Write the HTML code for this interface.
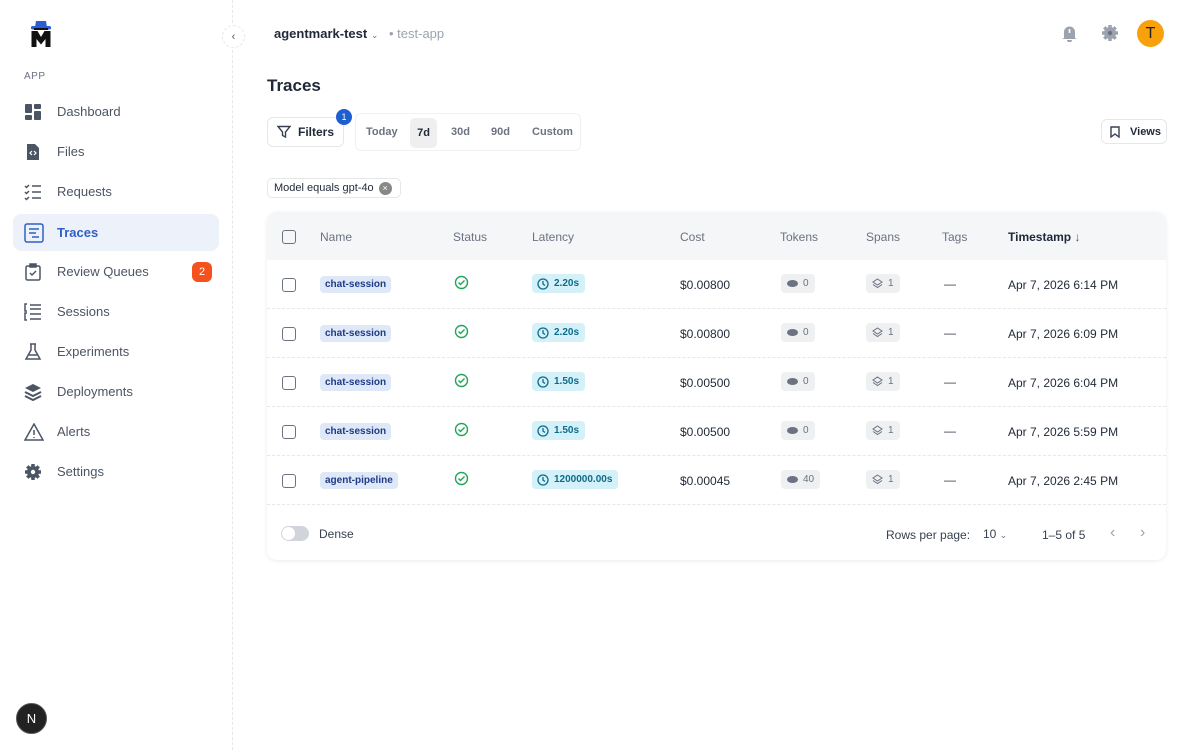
<!DOCTYPE html>
<html><head><meta charset="utf-8"><style>
*{box-sizing:border-box;margin:0;padding:0}
body{width:1200px;height:750px;background:#fff;font-family:"Liberation Sans",sans-serif;color:#1f2937;position:relative;overflow:hidden}
.side{position:absolute;left:0;top:0;width:233px;height:750px;border-right:1px dashed #e5e7eb}
.app{position:absolute;left:24px;top:71px;font-size:10px;color:#6b7280;letter-spacing:.5px}
.nav{position:absolute;left:13px;width:206px;height:37px;display:flex;align-items:center;font-size:13px;color:#4b5563}
.nav svg{position:absolute;left:11px}
.nav span{position:absolute;left:44px}
.nav.act{background:#edf2fa;border-radius:8px;color:#2f5fc4;font-weight:bold}
.badge{position:absolute;right:7px;width:20px;height:20px;border-radius:6px;background:#f4511e;color:#fff;font-size:11px;display:flex;align-items:center;justify-content:center}
.abs{position:absolute}
.btn{position:absolute;border:1px solid #e5e7eb;border-radius:6px;background:#fff;display:flex;align-items:center;font-size:12px;font-weight:bold;color:#1f2937}
.card{position:absolute;left:267px;top:212px;width:899px;height:348px;border-radius:10px;box-shadow:0 1px 4px rgba(0,0,0,.08);background:#fff;overflow:hidden}
.hd{position:absolute;left:0;top:0;width:100%;height:48px;background:#f4f6f8}
.cell{position:absolute;font-size:12px;white-space:nowrap}
.hc{color:#6b7280;font-size:12px;top:18px}
.row{position:absolute;left:0;width:100%;height:49px;border-bottom:1px dashed #e5e7eb}
.cb{position:absolute;left:15px;width:14px;height:14px;border:1.3px solid #6b7280;border-radius:3px}
.tag{position:absolute;left:53px;top:16px;background:#dfe8f7;color:#1e3a8a;font-size:10px;font-weight:bold;padding:3px 5px;border-radius:4px}
.lat{position:absolute;left:265px;top:14px;background:#d4f0f8;color:#0e6b8a;font-size:10px;font-weight:bold;padding:0 6px 0 22px;border-radius:4px;height:19px;display:flex;align-items:center}
.pill{position:absolute;top:14px;background:#eef0f2;color:#6b7280;font-size:10px;padding:0 6px 0 22px;border-radius:4px;height:19px;display:flex;align-items:center}
</style></head><body>
<div class="side">
 <svg class="abs" style="left:30px;top:20px" width="22" height="28" viewBox="0 0 22 28"><path d="M5 7 L6 1 L16 1 L17 7 Z" fill="#2b5fd0"/><rect x="1" y="6" width="20" height="3.5" rx="1.5" fill="#2b5fd0"/><rect x="4" y="8" width="14" height="2" fill="#111"/><path d="M1.5 27 V11 H7.5 L11 17 L14.5 11 H20.5 V27 H15.5 V19 L11 24.5 L6.5 19 V27 Z" fill="#111"/></svg>
 <div class="app">APP</div>
 <div class="nav" style="top:93px"><svg width="18" height="18" viewBox="0 0 18 18" fill="#4b5563"><rect x="1" y="1" width="7" height="9" rx="1"/><rect x="10" y="1" width="7" height="5" rx="1"/><rect x="1" y="12" width="7" height="5" rx="1"/><rect x="10" y="8" width="7" height="9" rx="1"/></svg><span>Dashboard</span></div>
 <div class="nav" style="top:133px"><svg width="18" height="18" viewBox="0 0 18 18"><path d="M3 1H11L15 5V17H3Z" fill="#4b5563"/><path d="M8 8L6 10L8 12M10 8L12 10L10 12" stroke="#fff" stroke-width="1.2" fill="none"/></svg><span>Files</span></div>
 <div class="nav" style="top:173px"><svg width="18" height="18" viewBox="0 0 18 18" stroke="#4b5563" stroke-width="1.5" fill="none"><path d="M1 3l1.5 1.5L5 2M1 9l1.5 1.5L5 8M1 15l1.5 1.5L5 14M8 3h9M8 9h9M8 15h9"/></svg><span>Requests</span></div>
 <div class="nav act" style="top:214px"><svg width="20" height="20" viewBox="0 0 20 20" stroke="#2f5fc4" stroke-width="1.5" fill="none"><rect x="1" y="1" width="18" height="18" rx="2"/><path d="M5 6h10M5 10h7M8 14h7"/></svg><span>Traces</span></div>
 <div class="nav" style="top:253px"><svg width="18" height="18" viewBox="0 0 18 18" stroke="#4b5563" stroke-width="1.5" fill="none"><rect x="2" y="3" width="14" height="14" rx="1.5"/><rect x="6" y="1" width="6" height="3" fill="#4b5563"/><path d="M6 10l2 2 4-4"/></svg><span>Review Queues</span><div class="badge">2</div></div>
 <div class="nav" style="top:293px"><svg width="18" height="18" viewBox="0 0 18 18" stroke="#4b5563" stroke-width="1.5" fill="none"><path d="M3 1H1V8H3M3 10H1V17H3M6 2h11M6 6h11M6 11h11M6 16h11"/></svg><span>Sessions</span></div>
 <div class="nav" style="top:333px"><svg width="18" height="18" viewBox="0 0 18 18" stroke="#4b5563" stroke-width="1.5" fill="none"><path d="M6 1h6M7 1v6L2 16h14L11 7V1M5 12h8"/></svg><span>Experiments</span></div>
 <div class="nav" style="top:373px"><svg width="18" height="18" viewBox="0 0 18 18" fill="#4b5563"><path d="M9 1L17 5L9 9L1 5Z"/><path d="M1 9L9 13L17 9" stroke="#4b5563" stroke-width="2" fill="none"/><path d="M1 13L9 17L17 13" stroke="#4b5563" stroke-width="2" fill="none"/></svg><span>Deployments</span></div>
 <div class="nav" style="top:413px"><svg width="20" height="18" viewBox="0 0 20 18" stroke="#4b5563" stroke-width="1.5" fill="none"><path d="M10 1L19 17H1Z"/><path d="M10 7v5M10 14v1"/></svg><span>Alerts</span></div>
 <div class="nav" style="top:453px"><svg width="18" height="18" viewBox="0 0 18 18"><circle cx="9" cy="9" r="6" fill="#4b5563"/><g stroke="#4b5563" stroke-width="3.5"><path d="M9 1v16M1 9h16M3.3 3.3l11.4 11.4M14.7 3.3L3.3 14.7"/></g><circle cx="9" cy="9" r="2.2" fill="#fff"/></svg><span>Settings</span></div>
 <div class="abs" style="left:16px;top:703px;width:31px;height:31px;border-radius:50%;background:#222;border:1px solid #555;color:#fff;font-size:13px;display:flex;align-items:center;justify-content:center">N</div>
</div>
<div class="abs" style="left:222px;top:25px;width:23px;height:23px;border-radius:50%;background:#fff;border:1px dashed #e5e7eb;font-size:11px;color:#555;display:flex;align-items:center;justify-content:center">‹</div>
<div class="abs" style="left:274px;top:26px;font-size:13px;font-weight:bold;color:#1f2937">agentmark-test <span style="font-size:9px;color:#6b7280;font-weight:normal">&#8964;</span></div>
<div class="abs" style="left:389px;top:26px;font-size:13px;color:#9ca3af">• test-app</div>
<svg class="abs" style="left:1061px;top:24px" width="17" height="18" viewBox="0 0 17 18"><path d="M3 14V8a5.5 5.5 0 0 1 11 0v6l2 1H1Z" fill="#9ca3af"/><rect x="7.7" y="5" width="1.6" height="4" fill="#fff"/><path d="M6 16h5a2.5 2.5 0 0 1-5 0" fill="#9ca3af"/></svg>
<svg class="abs" style="left:1101px;top:24px" width="18" height="18" viewBox="0 0 18 18"><circle cx="9" cy="9" r="6" fill="#9ca3af"/><g stroke="#9ca3af" stroke-width="3.5"><path d="M9 1v16M1 9h16M3.3 3.3l11.4 11.4M14.7 3.3L3.3 14.7"/></g><circle cx="9" cy="9" r="2.2" fill="#6b7280"/></svg>
<div class="abs" style="left:1137px;top:20px;width:27px;height:27px;border-radius:50%;background:#f9a10b;color:#222;font-size:16px;display:flex;align-items:center;justify-content:center">T</div>
<div class="abs" style="left:267px;top:76px;font-size:17px;font-weight:bold;color:#1f2937">Traces</div>
<div class="btn" style="left:267px;top:117px;width:77px;height:30px"><svg style="margin-left:9px" width="14" height="14" viewBox="0 0 14 14" stroke="#374151" stroke-width="1.4" fill="none"><path d="M1 1.5h12L8.5 7v5l-3-1.5V7Z"/></svg><span style="margin-left:7px">Filters</span></div>
<div class="abs" style="left:336px;top:109px;width:16px;height:16px;border-radius:50%;background:#1e5fd0;color:#fff;font-size:9px;display:flex;align-items:center;justify-content:center">1</div>
<div class="btn" style="left:355px;top:113px;width:226px;height:38px;border-color:#f0f1f3;color:#6b7280;font-size:11px">
 <span style="position:absolute;left:10px">Today</span>
 <span style="position:absolute;left:54px;top:4px;width:27px;height:30px;background:#efefef;border-radius:5px;color:#1f2937;display:flex;align-items:center;justify-content:center">7d</span>
 <span style="position:absolute;left:95px">30d</span><span style="position:absolute;left:135px">90d</span><span style="position:absolute;left:176px">Custom</span>
</div>
<div class="btn" style="left:1101px;top:119px;width:66px;height:25px;font-size:11px"><svg style="margin-left:8px" width="10" height="12" viewBox="0 0 10 12" stroke="#374151" stroke-width="1.4" fill="none"><path d="M1 1h8v10L5 8 1 11Z"/></svg><span style="margin-left:10px">Views</span></div>
<div class="btn" style="left:267px;top:178px;width:134px;height:20px;font-weight:normal;font-size:11px;border-radius:5px"><span style="margin-left:6px">Model equals gpt-4o</span><span style="margin-left:5px;width:13px;height:13px;border-radius:50%;background:#888;color:#fff;font-size:9px;display:flex;align-items:center;justify-content:center">×</span></div>
<div class="card">
 <div class="hd"><div class="cb" style="top:18px"></div>
  <div class="cell hc" style="left:53px">Name</div><div class="cell hc" style="left:186px">Status</div><div class="cell hc" style="left:265px">Latency</div><div class="cell hc" style="left:413px">Cost</div><div class="cell hc" style="left:513px">Tokens</div><div class="cell hc" style="left:599px">Spans</div><div class="cell hc" style="left:675px">Tags</div><div class="cell hc" style="left:741px;color:#1f2937;font-weight:bold">Timestamp <span style="font-weight:normal;color:#555">↓</span></div>
 </div>
 <div class="row" style="top:48px"><div class="cb" style="top:18px"></div><div class="tag">chat-session</div><svg class="abs" style="left:187px;top:15px" width="15" height="15" viewBox="0 0 15 15" stroke="#22a55a" stroke-width="1.4" fill="none"><circle cx="7.5" cy="7.5" r="6"/><path d="M4.5 7.5l2 2 4-4"/></svg><div class="lat"><svg class="abs" style="left:5px;top:4px" width="12" height="12" viewBox="0 0 12 12" stroke="#0e6b8a" stroke-width="1.3" fill="none"><circle cx="6" cy="6" r="5"/><path d="M6 3v3l2 1.5"/></svg>2.20s</div><div class="cell" style="left:413px;top:18px">$0.00800</div><div class="pill" style="left:514px"><svg class="abs" style="left:6px;top:6px" width="11" height="7"><ellipse cx="5.5" cy="3.5" rx="5.5" ry="3.5" fill="#6b7280"/></svg>0</div><div class="pill" style="left:599px"><svg class="abs" style="left:6px;top:4px" width="11" height="11" viewBox="0 0 11 11" stroke="#6b7280" fill="none"><path d="M5.5 1L10 4 5.5 7 1 4Z M1 6.5l4.5 3 4.5-3"/></svg>1</div><div class="cell" style="left:677px;top:17px;color:#374151">—</div><div class="cell" style="left:741px;top:18px">Apr 7, 2026 6:14 PM</div></div>
 <div class="row" style="top:97px"><div class="cb" style="top:18px"></div><div class="tag">chat-session</div><svg class="abs" style="left:187px;top:15px" width="15" height="15" viewBox="0 0 15 15" stroke="#22a55a" stroke-width="1.4" fill="none"><circle cx="7.5" cy="7.5" r="6"/><path d="M4.5 7.5l2 2 4-4"/></svg><div class="lat"><svg class="abs" style="left:5px;top:4px" width="12" height="12" viewBox="0 0 12 12" stroke="#0e6b8a" stroke-width="1.3" fill="none"><circle cx="6" cy="6" r="5"/><path d="M6 3v3l2 1.5"/></svg>2.20s</div><div class="cell" style="left:413px;top:18px">$0.00800</div><div class="pill" style="left:514px"><svg class="abs" style="left:6px;top:6px" width="11" height="7"><ellipse cx="5.5" cy="3.5" rx="5.5" ry="3.5" fill="#6b7280"/></svg>0</div><div class="pill" style="left:599px"><svg class="abs" style="left:6px;top:4px" width="11" height="11" viewBox="0 0 11 11" stroke="#6b7280" fill="none"><path d="M5.5 1L10 4 5.5 7 1 4Z M1 6.5l4.5 3 4.5-3"/></svg>1</div><div class="cell" style="left:677px;top:17px;color:#374151">—</div><div class="cell" style="left:741px;top:18px">Apr 7, 2026 6:09 PM</div></div>
 <div class="row" style="top:146px"><div class="cb" style="top:18px"></div><div class="tag">chat-session</div><svg class="abs" style="left:187px;top:15px" width="15" height="15" viewBox="0 0 15 15" stroke="#22a55a" stroke-width="1.4" fill="none"><circle cx="7.5" cy="7.5" r="6"/><path d="M4.5 7.5l2 2 4-4"/></svg><div class="lat"><svg class="abs" style="left:5px;top:4px" width="12" height="12" viewBox="0 0 12 12" stroke="#0e6b8a" stroke-width="1.3" fill="none"><circle cx="6" cy="6" r="5"/><path d="M6 3v3l2 1.5"/></svg>1.50s</div><div class="cell" style="left:413px;top:18px">$0.00500</div><div class="pill" style="left:514px"><svg class="abs" style="left:6px;top:6px" width="11" height="7"><ellipse cx="5.5" cy="3.5" rx="5.5" ry="3.5" fill="#6b7280"/></svg>0</div><div class="pill" style="left:599px"><svg class="abs" style="left:6px;top:4px" width="11" height="11" viewBox="0 0 11 11" stroke="#6b7280" fill="none"><path d="M5.5 1L10 4 5.5 7 1 4Z M1 6.5l4.5 3 4.5-3"/></svg>1</div><div class="cell" style="left:677px;top:17px;color:#374151">—</div><div class="cell" style="left:741px;top:18px">Apr 7, 2026 6:04 PM</div></div>
 <div class="row" style="top:195px"><div class="cb" style="top:18px"></div><div class="tag">chat-session</div><svg class="abs" style="left:187px;top:15px" width="15" height="15" viewBox="0 0 15 15" stroke="#22a55a" stroke-width="1.4" fill="none"><circle cx="7.5" cy="7.5" r="6"/><path d="M4.5 7.5l2 2 4-4"/></svg><div class="lat"><svg class="abs" style="left:5px;top:4px" width="12" height="12" viewBox="0 0 12 12" stroke="#0e6b8a" stroke-width="1.3" fill="none"><circle cx="6" cy="6" r="5"/><path d="M6 3v3l2 1.5"/></svg>1.50s</div><div class="cell" style="left:413px;top:18px">$0.00500</div><div class="pill" style="left:514px"><svg class="abs" style="left:6px;top:6px" width="11" height="7"><ellipse cx="5.5" cy="3.5" rx="5.5" ry="3.5" fill="#6b7280"/></svg>0</div><div class="pill" style="left:599px"><svg class="abs" style="left:6px;top:4px" width="11" height="11" viewBox="0 0 11 11" stroke="#6b7280" fill="none"><path d="M5.5 1L10 4 5.5 7 1 4Z M1 6.5l4.5 3 4.5-3"/></svg>1</div><div class="cell" style="left:677px;top:17px;color:#374151">—</div><div class="cell" style="left:741px;top:18px">Apr 7, 2026 5:59 PM</div></div>
 <div class="row" style="top:244px"><div class="cb" style="top:18px"></div><div class="tag">agent-pipeline</div><svg class="abs" style="left:187px;top:15px" width="15" height="15" viewBox="0 0 15 15" stroke="#22a55a" stroke-width="1.4" fill="none"><circle cx="7.5" cy="7.5" r="6"/><path d="M4.5 7.5l2 2 4-4"/></svg><div class="lat"><svg class="abs" style="left:5px;top:4px" width="12" height="12" viewBox="0 0 12 12" stroke="#0e6b8a" stroke-width="1.3" fill="none"><circle cx="6" cy="6" r="5"/><path d="M6 3v3l2 1.5"/></svg>1200000.00s</div><div class="cell" style="left:413px;top:18px">$0.00045</div><div class="pill" style="left:514px"><svg class="abs" style="left:6px;top:6px" width="11" height="7"><ellipse cx="5.5" cy="3.5" rx="5.5" ry="3.5" fill="#6b7280"/></svg>40</div><div class="pill" style="left:599px"><svg class="abs" style="left:6px;top:4px" width="11" height="11" viewBox="0 0 11 11" stroke="#6b7280" fill="none"><path d="M5.5 1L10 4 5.5 7 1 4Z M1 6.5l4.5 3 4.5-3"/></svg>1</div><div class="cell" style="left:677px;top:17px;color:#374151">—</div><div class="cell" style="left:741px;top:18px">Apr 7, 2026 2:45 PM</div></div>
 <div class="abs" style="left:14px;top:314px;width:28px;height:15px;border-radius:8px;background:#d1d5db"><div style="position:absolute;left:1px;top:1px;width:13px;height:13px;border-radius:50%;background:#fff"></div></div>
 <div class="cell" style="left:52px;top:315px;color:#374151">Dense</div>
 <div class="cell" style="left:619px;top:316px;color:#374151">Rows per page:</div>
 <div class="cell" style="left:716px;top:315px;color:#374151">10 <span style="font-size:9px;color:#6b7280">&#8964;</span></div>
 <div class="cell" style="left:775px;top:316px;color:#374151">1–5 of 5</div>
 <div class="cell" style="left:843px;top:312px;color:#9ca3af;font-size:16px">‹</div>
 <div class="cell" style="left:873px;top:312px;color:#9ca3af;font-size:16px">›</div>
</div>
</body></html>
